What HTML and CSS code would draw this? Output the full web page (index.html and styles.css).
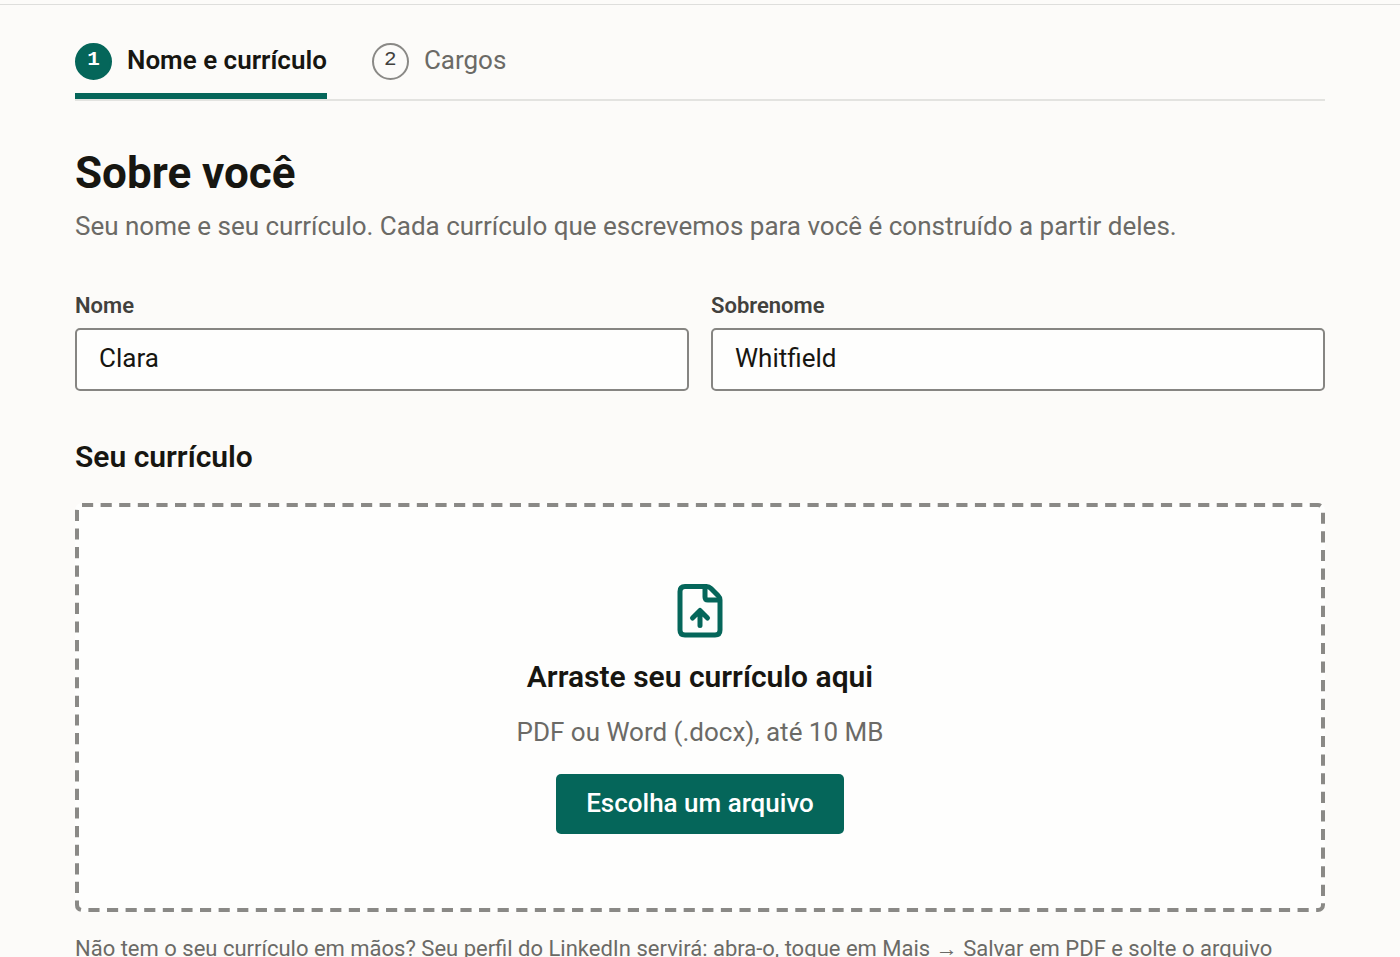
FILE: index.html
```
<!DOCTYPE html>
<html lang="pt-BR">
<head>
    <meta charset="UTF-8">
    <meta name="viewport" content="width=device-width, initial-scale=1.0">
    <title>Sobre você</title>
    <link rel="stylesheet" href="styles.css">
</head>
<body>
    <header class="topbar"></header>
    <main class="page">
        <nav class="steps">
            <a class="step active" href="#nome" aria-current="step">
                <span class="step-number">1</span>
                <span>Nome e currículo</span>
            </a>
            <a class="step" href="#cargos">
                <span class="step-number">2</span>
                <span>Cargos</span>
            </a>
        </nav>

        <h1>Sobre você</h1>
        <p class="intro">Seu nome e seu currículo. Cada currículo que escrevemos para você é construído a partir deles.</p>

        <form id="aboutForm">
            <div class="fields">
                <div class="field">
                    <label for="nome">Nome</label>
                    <input type="text" id="nome" name="nome" value="Clara">
                </div>
                <div class="field">
                    <label for="sobrenome">Sobrenome</label>
                    <input type="text" id="sobrenome" name="sobrenome" value="Whitfield">
                </div>
            </div>

            <h2>Seu currículo</h2>
            <div class="dropzone">
                <svg class="dropzone-border" aria-hidden="true">
                    <rect pathLength="1770"/>
                </svg>
                <svg class="file-icon" viewBox="0 0 92 112" aria-hidden="true">
                    <path d="M17 7H59Q64 7 68 11L82 25Q86 29 86 34V94Q86 104 76 104H16Q6 104 6 94V17Q6 7 16 7Z"/>
                    <path d="M56 8V28Q56 34 62 34H85"/>
                    <path d="M46 85V56M31 70L46 55L61 70"/>
                </svg>
                <p class="dropzone-title">Arraste seu currículo aqui</p>
                <p class="dropzone-types">PDF ou Word (.docx), até 10 MB</p>
                <button type="button">Escolha um arquivo</button>
            </div>
            <p class="hint">Não tem o seu currículo em mãos? Seu perfil do LinkedIn servirá: abra-o, toque em Mais <span class="arrow">→</span> Salvar em PDF e solte o arquivo</p>
        </form>
    </main>
</body>
</html>
```
FILE: styles.css
```
* {
    box-sizing: border-box;
}
body {
    margin: 0;
    font-family: Roboto, "Liberation Sans", sans-serif;
    font-size: 26px;
    line-height: 36px;
    color: #171611;
    background-color: #fcfbf9;
}
h1, h2, p {
    margin: 0;
}
.topbar {
    height: 5px;
    border-bottom: 1px solid #dededc;
}
.page {
    padding: 38px 75px 0;
}
.steps {
    display: flex;
    gap: 45px;
    border-bottom: 2px solid #e3e3e0;
}
.step {
    display: flex;
    align-items: flex-start;
    gap: 15px;
    height: 56px;
    color: #6b6a66;
    line-height: 34px;
    text-decoration: none;
    border-bottom: 6px solid transparent;
}
.step.active {
    color: #171611;
    font-weight: 600;
    border-bottom-color: #05665a;
}
.step-number {
    display: flex;
    justify-content: center;
    width: 37px;
    height: 37px;
    border: 2px solid #8a8986;
    border-radius: 50%;
    color: #42413d;
    font-family: "Liberation Mono", monospace;
    font-size: 21px;
    line-height: 30px;
}
.active .step-number {
    color: #fff;
    background-color: #05665a;
    border-color: #05665a;
}
h1 {
    margin-top: 44px;
    font-size: 44px;
    line-height: 56px;
    font-weight: 700;
}
.intro {
    margin-top: 7px;
    color: #6b6a66;
}
.fields {
    display: grid;
    grid-template-columns: 1fr 1fr;
    gap: 22px;
    margin-top: 46px;
}
label {
    display: block;
    margin-bottom: 6px;
    font-size: 22px;
    line-height: 32px;
    font-weight: 600;
    color: #42413d;
}
input {
    display: block;
    width: 100%;
    height: 63px;
    padding: 0 22px 3px;
    border: 2px solid #868582;
    border-radius: 5px;
    background-color: #fefefd;
    color: #171611;
    font-family: inherit;
    font-size: 26px;
}
h2 {
    margin-top: 46px;
    font-size: 30px;
    line-height: 40px;
    font-weight: 600;
}
.dropzone {
    position: relative;
    display: flex;
    flex-direction: column;
    align-items: center;
    margin-top: 26px;
    padding: 80px 30px 78px;
    border-radius: 7px;
    background-color: #fefefd;
}
.dropzone-border {
    position: absolute;
    inset: 0;
    width: 100%;
    height: 100%;
}
.dropzone-border rect {
    x: 2px;
    y: 2px;
    width: calc(100% - 4px);
    height: calc(100% - 4px);
    rx: 5px;
    fill: none;
    stroke: #8a8986;
    stroke-width: 4px;
    stroke-dasharray: 6 4;
}
.file-icon {
    width: 46px;
    height: 56px;
    fill: none;
    stroke: #05665a;
    stroke-width: 10px;
    stroke-linecap: round;
    stroke-linejoin: round;
}
.dropzone-title {
    margin-top: 18px;
    font-size: 30px;
    line-height: 40px;
    font-weight: 600;
}
.dropzone-types {
    margin-top: 17px;
    color: #6b6a66;
}
button {
    height: 60px;
    margin-top: 24px;
    padding: 0 30px 3px;
    border: none;
    border-radius: 5px;
    background-color: #05665a;
    color: #fff;
    font-family: inherit;
    font-size: 26px;
    font-weight: 500;
    cursor: pointer;
}
.hint {
    margin-top: 21px;
    font-size: 22px;
    line-height: 32px;
    color: #6b6a66;
}
.arrow {
    font-family: "Liberation Sans", sans-serif;
}
```
